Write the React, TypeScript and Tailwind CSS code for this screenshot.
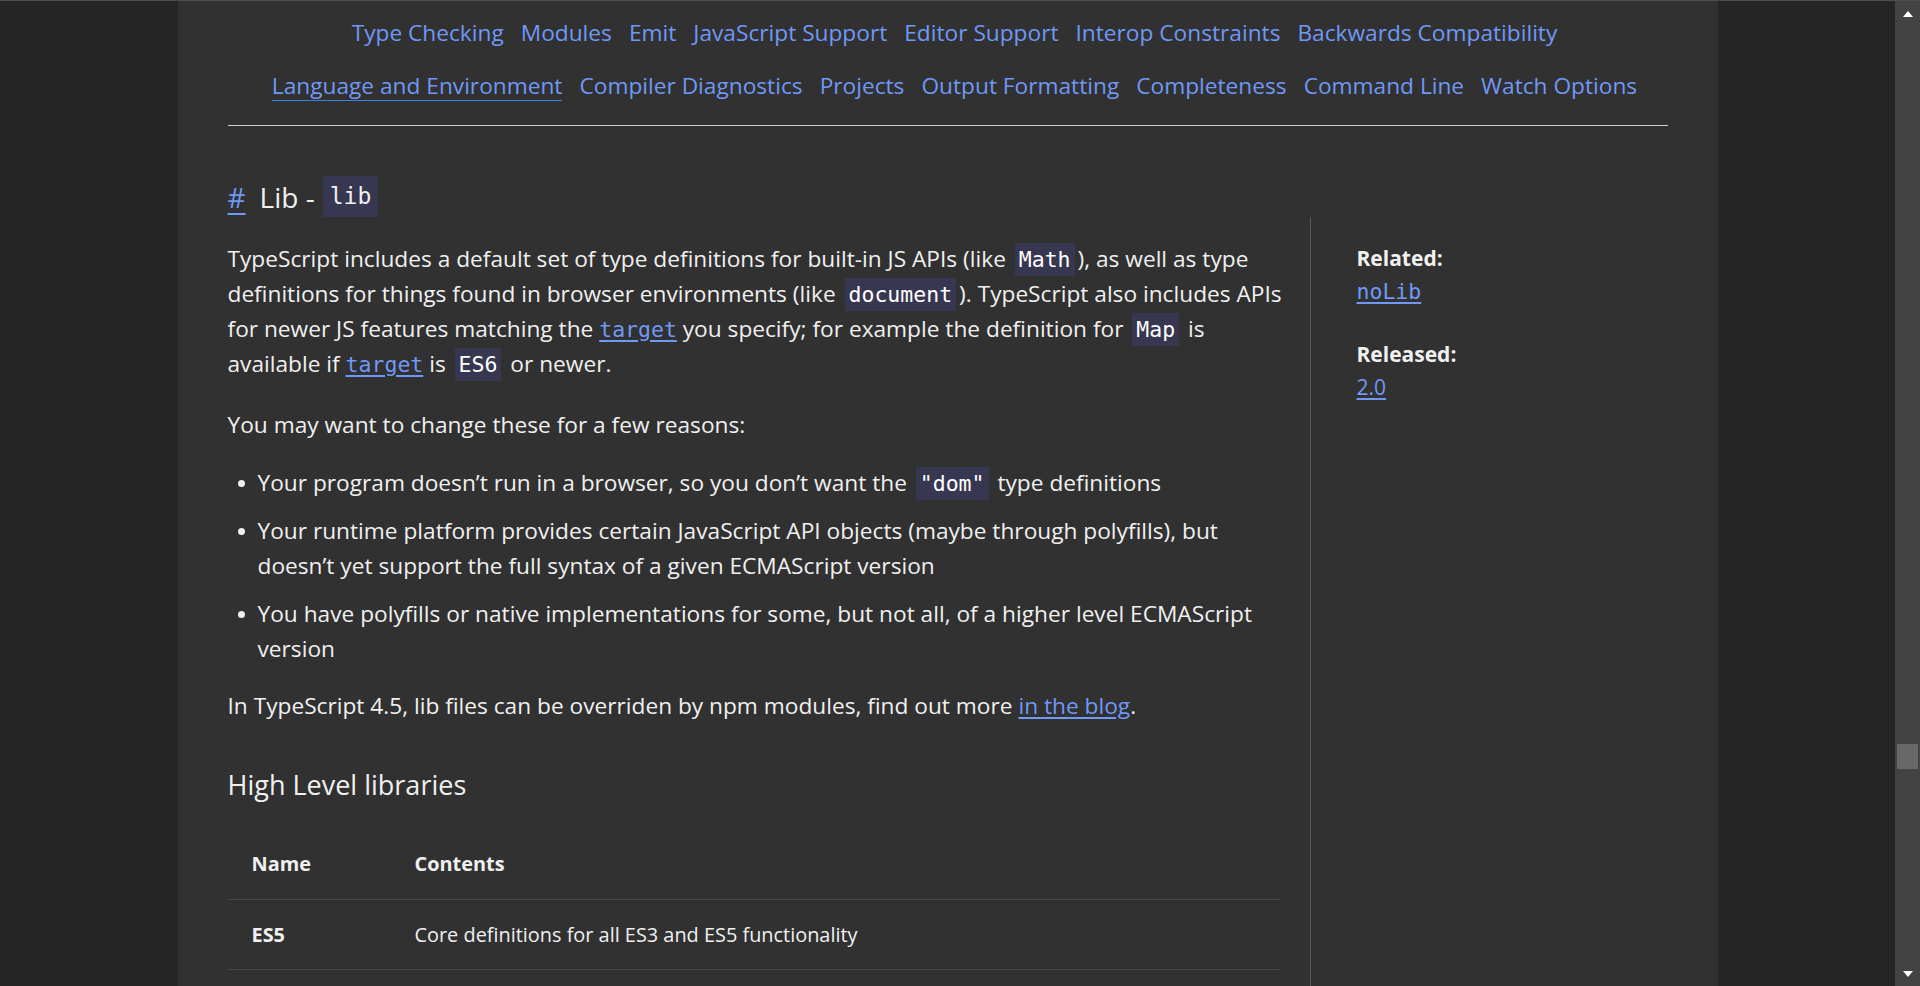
import React from "react";

const navRowOne = ["Type Checking", "Modules", "Emit", "JavaScript Support", "Editor Support", "Interop Constraints", "Backwards Compatibility"];
const navRowTwo = ["Language and Environment", "Compiler Diagnostics", "Projects", "Output Formatting", "Completeness", "Command Line", "Watch Options"];

const Code: React.FC<{ children: React.ReactNode }> = ({ children }) => (
  <code className="mx-[3px] bg-[#373751] px-[4px] py-[4px] font-['DejaVu_Sans_Mono',monospace] text-[21.5px] leading-none text-white">
    {children}
  </code>
);

const CodeLink: React.FC<{ children: React.ReactNode }> = ({ children }) => (
  <a className="font-['DejaVu_Sans_Mono',monospace] text-[21.5px] leading-none text-[#7098f5] underline underline-offset-[3px]" href="#">
    {children}
  </a>
);

const Bullet: React.FC<{ children: React.ReactNode }> = ({ children }) => (
  <li className="flex">
    <span className="mt-[15px] ml-[10px] mr-[13px] h-[7px] w-[7px] shrink-0 rounded-full bg-[#f0f0f0]" />
    <span>{children}</span>
  </li>
);

const App: React.FC = () => {
  return (
    <div className="flex h-screen overflow-hidden border-t border-[#4d4d4d] bg-[#252525] font-['Open_Sans',sans-serif] text-[#f0f0f0]">
      <div className="flex flex-1 justify-center">
        <div className="w-[1540px] bg-[#313131] px-[50px]">
          {/* category nav */}
          <nav className="flex flex-col items-center pt-[18px] text-[22.7px] leading-[28px] text-[#7098f5]">
            <div className="flex gap-x-[17px] pl-[14px]">
              {navRowOne.map((item) => (
                <a key={item} href="#">{item}</a>
              ))}
            </div>
            <div className="mt-[25px] flex gap-x-[17px] pl-[14px]">
              {navRowTwo.map((item, i) => (
                <a key={item} href="#" className={i === 0 ? "border-b border-[#3e7fe0]" : "border-b border-transparent"}>
                  {item}
                </a>
              ))}
            </div>
          </nav>
          <hr className="mt-[24px] border-0 border-t border-[#d0d0d0]" />

          <h2 className="mt-[50px] flex h-[41px] items-center text-[28px] font-normal">
            <a href="#" className="text-[#7098f5] underline underline-offset-[5px]">#</a>
            <span className="ml-[14px]">Lib -</span>
            <code className="ml-[8px] flex h-full items-center bg-[#373751] px-[7px] font-['DejaVu_Sans_Mono',monospace] text-[23px]">lib</code>
          </h2>

          <div className="flex">
            <article className="w-[1064px] shrink-0 text-[22.7px] leading-[35px]">
              <p className="mt-[24px]">
                TypeScript includes a default set of type definitions for built-in JS APIs (like <Code>Math</Code>), as well as type
                definitions for things found in browser environments (like <Code>document</Code>). TypeScript also includes APIs
                for newer JS features matching the <CodeLink>target</CodeLink> you specify; for example the definition for <Code>Map</Code> is
                available if <CodeLink>target</CodeLink> is <Code>ES6</Code> or newer.
              </p>
              <p className="mt-[26px]">You may want to change these for a few reasons:</p>
              <ul className="mt-[23px] flex flex-col gap-[13px]">
                <Bullet>
                  Your program doesn’t run in a browser, so you don’t want the <Code>"dom"</Code> type definitions
                </Bullet>
                <Bullet>
                  Your runtime platform provides certain JavaScript API objects (maybe through polyfills), but doesn’t yet support the full syntax of a given ECMAScript version
                </Bullet>
                <Bullet>
                  You have polyfills or native implementations for some, but not all, of a higher level ECMAScript version
                </Bullet>
              </ul>
              <p className="mt-[22px]">
                In TypeScript 4.5, lib files can be overriden by npm modules, find out more{" "}
                <a href="#" className="text-[#7098f5] underline underline-offset-[3px]">in the blog</a>.
              </p>

              <h3 className="mt-[42px] text-[27px] leading-[40px] font-normal">High Level libraries</h3>

              <table className="mt-[24px] w-[1052px] text-left text-[19.9px]">
                <thead>
                  <tr className="h-[70px] border-b border-[#484848]">
                    <th className="w-[187px] pl-[24px] font-bold">Name</th>
                    <th className="font-bold">Contents</th>
                  </tr>
                </thead>
                <tbody>
                  <tr className="h-[70px] border-b border-[#484848]">
                    <td className="pl-[24px] font-bold">ES5</td>
                    <td>Core definitions for all ES3 and ES5 functionality</td>
                  </tr>
                  <tr className="h-[70px] border-b border-[#484848]">
                    <td className="pl-[24px] font-bold">ES2015</td>
                    <td>Additional APIs available in ES2015 (also known as ES6)</td>
                  </tr>
                </tbody>
              </table>
            </article>

            {/* sidebar */}
            <aside className="ml-[18px] flex-1 border-l border-[#575757] pt-[25px] pl-[46px] text-[21px] leading-[33px]">
              <div className="font-bold">Related:</div>
              <a href="#" className="font-['DejaVu_Sans_Mono',monospace] text-[21.5px] text-[#7098f5] underline underline-offset-[3px]">noLib</a>
              <div className="mt-[30px] font-bold">Released:</div>
              <a href="#" className="text-[#7098f5] underline underline-offset-[3px]">2.0</a>
            </aside>
          </div>
        </div>
      </div>

      {/* fake scrollbar */}
      <div className="flex w-[25px] shrink-0 flex-col items-center bg-[#434343]">
        <div className="flex h-[25px] items-center justify-center">
          <div className="h-0 w-0 border-x-[5px] border-b-[6px] border-x-transparent border-b-white" />
        </div>
        <div className="h-[718px]" />
        <div className="h-[25px] w-[21px] bg-[#686868]" />
        <div className="flex-1" />
        <div className="flex h-[25px] items-center justify-center">
          <div className="h-0 w-0 border-x-[5px] border-t-[6px] border-x-transparent border-t-white" />
        </div>
      </div>
    </div>
  );
};

export default App;
